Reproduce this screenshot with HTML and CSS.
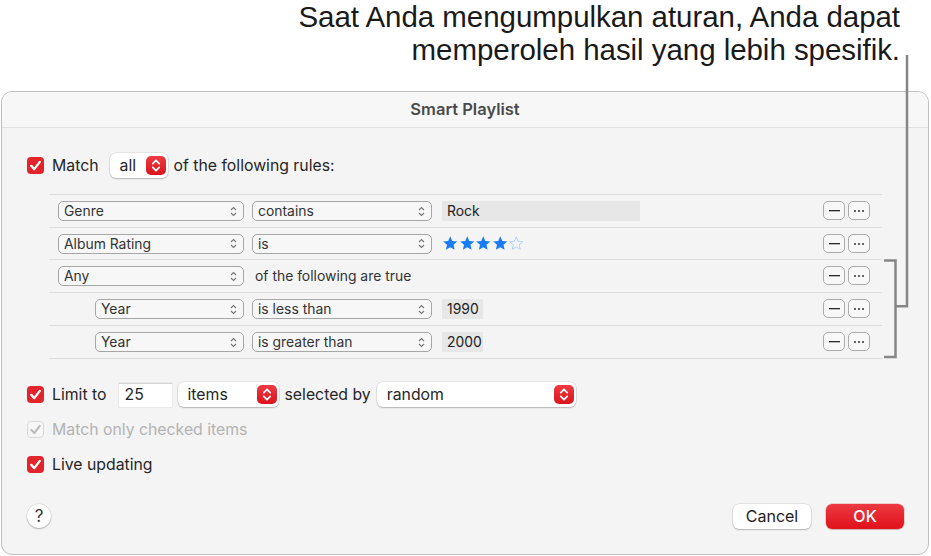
FILE: index.html
```html
<!DOCTYPE html>
<html>
<head>
<meta charset="utf-8">
<link rel="stylesheet" href="styles.css">
</head>
<body>
<div class="callout">
  <p class="callout-text">Saat Anda mengumpulkan aturan, Anda dapat<br>memperoleh hasil yang lebih spesifik.</p>
</div>

<div class="dialog">
  <div class="titlebar">Smart Playlist</div>
  <div class="content">
    <div class="line match-row">
      <svg class="check" width="17" height="17" viewBox="0 0 17 17"><rect x="0" y="0" width="17" height="17" rx="4" fill="#e2242c"/><path d="M4.3 8.9 L7.3 12.1 L12.8 4.9" fill="none" stroke="#fff" stroke-width="2.3" stroke-linecap="round" stroke-linejoin="round"/></svg>
      <span class="label">Match</span>
      <span class="wpopup w-all"><span class="wpopup-text">all</span><span class="redstep"><svg width="20" height="19" viewBox="0 0 20 19"><path d="M6.8 7.6 L10 4.4 L13.2 7.6 M6.8 11.4 L10 14.6 L13.2 11.4" fill="none" stroke="#fff" stroke-width="1.7" stroke-linecap="round" stroke-linejoin="round"/></svg></span></span>
      <span class="label after-all">of the following rules:</span>
    </div>

    <div class="rules">
      <div class="rule">
        <span class="popup p-first">Genre<svg class="chev" width="7" height="11" viewBox="0 0 7 11"><path d="M1 4 L3.5 1.6 L6 4 M1 7 L3.5 9.4 L6 7" fill="none" stroke="#777" stroke-width="1.1"/></svg></span>
        <span class="popup p-op">contains<svg class="chev" width="7" height="11" viewBox="0 0 7 11"><path d="M1 4 L3.5 1.6 L6 4 M1 7 L3.5 9.4 L6 7" fill="none" stroke="#777" stroke-width="1.1"/></svg></span>
        <span class="field f-wide">Rock</span>
        <span class="actions"><span class="mini"><i class="dash"></i></span><span class="mini"><i class="dots"><b></b><b></b><b></b></i></span></span>
      </div>
      <div class="rule short">
        <span class="popup p-first">Album Rating<svg class="chev" width="7" height="11" viewBox="0 0 7 11"><path d="M1 4 L3.5 1.6 L6 4 M1 7 L3.5 9.4 L6 7" fill="none" stroke="#777" stroke-width="1.1"/></svg></span>
        <span class="popup p-op">is<svg class="chev" width="7" height="11" viewBox="0 0 7 11"><path d="M1 4 L3.5 1.6 L6 4 M1 7 L3.5 9.4 L6 7" fill="none" stroke="#777" stroke-width="1.1"/></svg></span>
        <span class="stars">
          <svg width="16.5" height="16.5" viewBox="0 0 24 24"><path d="M12 1.8 L14.9 8.6 L22.3 9.3 L16.7 14.2 L18.4 21.5 L12 17.7 L5.6 21.5 L7.3 14.2 L1.7 9.3 L9.1 8.6 Z" fill="#1a7cf4"/></svg>
          <svg width="16.5" height="16.5" viewBox="0 0 24 24"><path d="M12 1.8 L14.9 8.6 L22.3 9.3 L16.7 14.2 L18.4 21.5 L12 17.7 L5.6 21.5 L7.3 14.2 L1.7 9.3 L9.1 8.6 Z" fill="#1a7cf4"/></svg>
          <svg width="16.5" height="16.5" viewBox="0 0 24 24"><path d="M12 1.8 L14.9 8.6 L22.3 9.3 L16.7 14.2 L18.4 21.5 L12 17.7 L5.6 21.5 L7.3 14.2 L1.7 9.3 L9.1 8.6 Z" fill="#1a7cf4"/></svg>
          <svg width="16.5" height="16.5" viewBox="0 0 24 24"><path d="M12 1.8 L14.9 8.6 L22.3 9.3 L16.7 14.2 L18.4 21.5 L12 17.7 L5.6 21.5 L7.3 14.2 L1.7 9.3 L9.1 8.6 Z" fill="#1a7cf4"/></svg>
          <svg width="16.5" height="16.5" viewBox="0 0 24 24"><path d="M12 2.8 L14.7 9.1 L21.4 9.8 L16.3 14.2 L17.8 20.8 L12 17.3 L6.2 20.8 L7.7 14.2 L2.6 9.8 L9.3 9.1 Z" fill="none" stroke="#a9cdf8" stroke-width="1.3"/></svg>
        </span>
        <span class="actions"><span class="mini"><i class="dash"></i></span><span class="mini"><i class="dots"><b></b><b></b><b></b></i></span></span>
      </div>
      <div class="rule">
        <span class="popup p-first">Any<svg class="chev" width="7" height="11" viewBox="0 0 7 11"><path d="M1 4 L3.5 1.6 L6 4 M1 7 L3.5 9.4 L6 7" fill="none" stroke="#777" stroke-width="1.1"/></svg></span>
        <span class="rule-text">of the following are true</span>
        <span class="actions"><span class="mini"><i class="dash"></i></span><span class="mini"><i class="dots"><b></b><b></b><b></b></i></span></span>
      </div>
      <div class="rule nested">
        <span class="popup p-nested">Year<svg class="chev" width="7" height="11" viewBox="0 0 7 11"><path d="M1 4 L3.5 1.6 L6 4 M1 7 L3.5 9.4 L6 7" fill="none" stroke="#777" stroke-width="1.1"/></svg></span>
        <span class="popup p-op">is less than<svg class="chev" width="7" height="11" viewBox="0 0 7 11"><path d="M1 4 L3.5 1.6 L6 4 M1 7 L3.5 9.4 L6 7" fill="none" stroke="#777" stroke-width="1.1"/></svg></span>
        <span class="field f-small">1990</span>
        <span class="actions"><span class="mini"><i class="dash"></i></span><span class="mini"><i class="dots"><b></b><b></b><b></b></i></span></span>
      </div>
      <div class="rule nested">
        <span class="popup p-nested">Year<svg class="chev" width="7" height="11" viewBox="0 0 7 11"><path d="M1 4 L3.5 1.6 L6 4 M1 7 L3.5 9.4 L6 7" fill="none" stroke="#777" stroke-width="1.1"/></svg></span>
        <span class="popup p-op">is greater than<svg class="chev" width="7" height="11" viewBox="0 0 7 11"><path d="M1 4 L3.5 1.6 L6 4 M1 7 L3.5 9.4 L6 7" fill="none" stroke="#777" stroke-width="1.1"/></svg></span>
        <span class="field f-small">2000</span>
        <span class="actions"><span class="mini"><i class="dash"></i></span><span class="mini"><i class="dots"><b></b><b></b><b></b></i></span></span>
      </div>
    </div>

    <div class="options">
      <div class="line">
        <svg class="check" width="17" height="17" viewBox="0 0 17 17"><rect x="0" y="0" width="17" height="17" rx="4" fill="#e2242c"/><path d="M4.3 8.9 L7.3 12.1 L12.8 4.9" fill="none" stroke="#fff" stroke-width="2.3" stroke-linecap="round" stroke-linejoin="round"/></svg>
        <span class="label">Limit to</span>
        <span class="numfield">25</span>
        <span class="wpopup w-items"><span class="wpopup-text">items</span><span class="redstep"><svg width="20" height="19" viewBox="0 0 20 19"><path d="M6.8 7.6 L10 4.4 L13.2 7.6 M6.8 11.4 L10 14.6 L13.2 11.4" fill="none" stroke="#fff" stroke-width="1.7" stroke-linecap="round" stroke-linejoin="round"/></svg></span></span>
        <span class="label sel-by">selected by</span>
        <span class="wpopup w-random"><span class="wpopup-text">random</span><span class="redstep"><svg width="20" height="19" viewBox="0 0 20 19"><path d="M6.8 7.6 L10 4.4 L13.2 7.6 M6.8 11.4 L10 14.6 L13.2 11.4" fill="none" stroke="#fff" stroke-width="1.7" stroke-linecap="round" stroke-linejoin="round"/></svg></span></span>
      </div>
      <div class="line disabled">
        <svg class="check" width="17" height="17" viewBox="0 0 17 17"><rect x="0.5" y="0.5" width="16" height="16" rx="3.5" fill="#f7f7f7" stroke="#d9d9d9"/><path d="M4.3 8.9 L7.3 12.1 L12.8 4.9" fill="none" stroke="#b9b9b9" stroke-width="2" stroke-linecap="round" stroke-linejoin="round"/></svg>
        <span class="label">Match only checked items</span>
      </div>
      <div class="line">
        <svg class="check" width="17" height="17" viewBox="0 0 17 17"><rect x="0" y="0" width="17" height="17" rx="4" fill="#e2242c"/><path d="M4.3 8.9 L7.3 12.1 L12.8 4.9" fill="none" stroke="#fff" stroke-width="2.3" stroke-linecap="round" stroke-linejoin="round"/></svg>
        <span class="label">Live updating</span>
      </div>
    </div>

    <div class="footer">
      <span class="help">?</span>
      <span class="spacer"></span>
      <span class="btn cancel">Cancel</span>
      <span class="btn ok">OK</span>
    </div>
  </div>
</div>

<svg class="annotation" width="931" height="556" viewBox="0 0 931 556">
  <path d="M907 55 V306.2 H895.5" fill="none" stroke="#868686" stroke-width="2.5"/>
  <path d="M884 260.6 H895.5 V357 H884" fill="none" stroke="#868686" stroke-width="2.5"/>
</svg>
</body>
</html>
```

FILE: styles.css
```css
* { box-sizing: border-box; margin: 0; padding: 0; }

body {
  width: 931px;
  height: 556px;
  background: #ffffff;
  font-family: Inter, "Liberation Sans", sans-serif;
  color: #262626;
  position: relative;
  overflow: hidden;
}

.callout {
  height: 91px;
  padding-top: 1px;
  padding-right: 31px;
  text-align: right;
}

.callout-text {
  font-family: "Liberation Sans", Arial, sans-serif;
  font-size: 29.5px;
  letter-spacing: -0.05px;
  line-height: 32.5px;
  color: #1a1a1a;
}

.dialog {
  margin-left: 1px;
  width: 928px;
  height: 464px;
  border: 1px solid #bfbfbf;
  border-radius: 11px;
  background: #f4f4f4;
  overflow: hidden;
}

.titlebar {
  height: 36px;
  background: #f7f7f7;
  border-bottom: 1px solid #e1e1e1;
  text-align: center;
  font-size: 16.5px;
  font-weight: 600;
  line-height: 34px;
  color: #4a4a4a;
}

.content {
  display: flex;
  flex-direction: column;
}

.line {
  display: flex;
  align-items: center;
  height: 25px;
  padding-left: 25px;
  font-size: 15.8px;
}

.match-row { margin-top: 25px; }

.check { flex: none; }

.label { margin-left: 8px; white-space: nowrap; }

.after-all { margin-left: 6px; }

.wpopup {
  display: flex;
  align-items: center;
  justify-content: space-between;
  height: 25px;
  background: #ffffff;
  border-radius: 6px;
  box-shadow: 0 0 0 0.5px rgba(0,0,0,0.12), 0 1px 1.5px rgba(0,0,0,0.22);
  padding: 0 2px 0 10px;
}

.w-all { width: 58px; margin-left: 11px; }
.w-items { width: 101px; margin-left: 6px; }
.w-random { width: 199px; margin-left: 6px; }
.sel-by { margin-left: 6px; }

.redstep {
  display: flex;
  width: 20px;
  height: 19px;
  border-radius: 5px;
  background: linear-gradient(#ee3b42, #d9141c);
}

.numfield {
  display: flex;
  align-items: center;
  width: 53px;
  height: 24px;
  margin-left: 12px;
  padding-left: 6px;
  background: #ffffff;
  box-shadow: inset 0 1px 0 #d4d4d4, 0 0 0 0.5px #dedede;
}

/* rules table */
.rules {
  margin: 16px 46px 0 47px;
  border-bottom: 1px solid #dddddd;
}

.rule {
  display: flex;
  align-items: center;
  height: 33px;
  border-top: 1px solid #dddddd;
  padding: 0 12px 0 9px;
  font-size: 13.9px;
}

.rule.short { height: 32px; }

.rule.nested { padding-left: 46px; }

.popup {
  display: flex;
  align-items: center;
  justify-content: space-between;
  height: 20px;
  border: 1px solid #a6a6a6;
  border-radius: 5px;
  padding: 0 6px 0 5px;
  background: #f7f7f7;
  color: #333;
  white-space: nowrap;
}

.p-first { width: 186px; }
.p-nested { width: 149px; }
.p-op { width: 180px; margin-left: 8px; }

.chev { flex: none; }

.field {
  display: flex;
  align-items: center;
  height: 20px;
  margin-left: 10px;
  padding-left: 5px;
  background: #e7e7e7;
  color: #222;
}

.f-wide { width: 198px; }
.f-small { width: 41px; }

.stars {
  display: flex;
  margin-left: 10px;
}

.rule-text { margin-left: 11px; color: #333; }

.actions {
  margin-left: auto;
  align-self: flex-start;
  margin-top: 6px;
  display: flex;
  gap: 3px;
}

.mini {
  display: flex;
  align-items: center;
  justify-content: center;
  width: 22px;
  height: 19px;
  border: 1px solid #ababab;
  border-radius: 5px;
  background: #f8f8f8;
}

.dash {
  display: block;
  width: 11px;
  height: 1px;
  background: #2a2a2a;
  box-shadow: 0 1px 0 rgba(60,60,60,0.35);
}

.dots {
  display: flex;
  gap: 2px;
}

.dots b {
  display: block;
  width: 2px;
  height: 2px;
  border-radius: 50%;
  background: #333;
}

/* options */
.options {
  margin-top: 23px;
  display: flex;
  flex-direction: column;
  gap: 10px;
}

.disabled .label { color: #b3b3b3; }

/* footer */
.footer {
  display: flex;
  align-items: center;
  margin-top: 26px;
  padding: 0 24px 0 25px;
  height: 26px;
}

.help {
  display: flex;
  align-items: center;
  justify-content: center;
  width: 24px;
  height: 24px;
  border-radius: 50%;
  background: #ffffff;
  box-shadow: 0 0 0 0.5px rgba(0,0,0,0.12), 0 1px 1.5px rgba(0,0,0,0.25);
  font-size: 17px;
  color: #333;
}

.spacer { flex: 1; }

.btn {
  display: flex;
  align-items: center;
  justify-content: center;
  width: 78px;
  height: 25px;
  border-radius: 6px;
  font-size: 16px;
}

.cancel {
  background: #ffffff;
  color: #222;
  box-shadow: 0 0 0 0.5px rgba(0,0,0,0.12), 0 1px 1.5px rgba(0,0,0,0.22);
}

.ok {
  margin-left: 15px;
  background: linear-gradient(#ec3a42, #e0111a);
  color: #ffffff;
  font-weight: 500;
  box-shadow: 0 0 0 0.5px rgba(180,0,0,0.3), 0 1px 1px rgba(0,0,0,0.15);
}

.annotation {
  position: absolute;
  left: 0;
  top: 0;
  pointer-events: none;
}
```
